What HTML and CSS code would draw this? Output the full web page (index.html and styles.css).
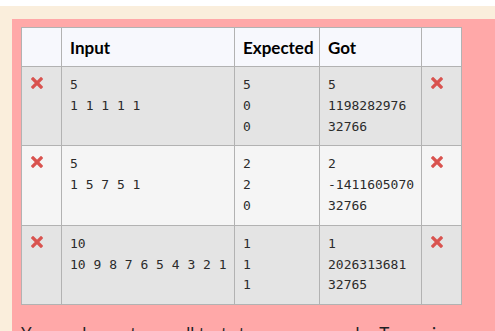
FILE: index.html
```html
<!DOCTYPE html>
<html>
<head>
<meta charset="utf-8">
<link rel="stylesheet" href="styles.css">
</head>
<body>
<div class="page">
  <div class="result">
    <table class="tests">
      <thead>
        <tr>
          <th class="c-icon"></th>
          <th class="c-input">Input</th>
          <th class="c-exp">Expected</th>
          <th class="c-got">Got</th>
          <th class="c-icon"></th>
        </tr>
      </thead>
      <tbody>
        <tr class="r0">
          <td><svg class="x" viewBox="0 0 12 12"><path d="M2 2L10 10M10 2L2 10"/></svg></td>
          <td><pre>5
1 1 1 1 1</pre></td>
          <td><pre>5
0
0</pre></td>
          <td><pre>5
1198282976
32766</pre></td>
          <td><svg class="x" viewBox="0 0 12 12"><path d="M2 2L10 10M10 2L2 10"/></svg></td>
        </tr>
        <tr class="r1">
          <td><svg class="x" viewBox="0 0 12 12"><path d="M2 2L10 10M10 2L2 10"/></svg></td>
          <td><pre>5
1 5 7 5 1</pre></td>
          <td><pre>2
2
0</pre></td>
          <td><pre>2
-1411605070
32766</pre></td>
          <td><svg class="x" viewBox="0 0 12 12"><path d="M2 2L10 10M10 2L2 10"/></svg></td>
        </tr>
        <tr class="r0">
          <td><svg class="x" viewBox="0 0 12 12"><path d="M2 2L10 10M10 2L2 10"/></svg></td>
          <td><pre>10
10 9 8 7 6 5 4 3 2 1</pre></td>
          <td><pre>1
1
1</pre></td>
          <td><pre>1
2026313681
32765</pre></td>
          <td><svg class="x" viewBox="0 0 12 12"><path d="M2 2L10 10M10 2L2 10"/></svg></td>
        </tr>
      </tbody>
    </table>
    <p class="msg">Your code must pass all tests to earn any marks. Try again.</p>
  </div>
</div>
</body>
</html>
```
FILE: styles.css
```css
html, body {
  margin: 0;
  padding: 0;
  background: #ffffff;
  overflow: hidden;
}
body {
  font-family: "Lato", "Open Sans", sans-serif;
  color: #1d2125;
}
.page {
  margin-top: 6px;
  background: #faeedc;
  padding: 13px 0 0 12px;
  min-height: 400px;
}
.result {
  background: #ffa8a8;
  padding: 8px 0 10px 9px;
}
.tests {
  border-collapse: collapse;
  table-layout: fixed;
  width: 441px;
}
.tests th, .tests td {
  box-sizing: border-box;
  border: 1px solid #b2b2b2;
  padding: 8px 8px;
  text-align: left;
  vertical-align: top;
}
.tests th {
  background: #f7f8fd;
  font-weight: 700;
  font-size: 17px;
  line-height: 22px;
  padding-top: 9px;
  padding-bottom: 7px;
  color: #000;
}
.c-icon { width: 40px; }
.c-input { width: 173px; }
.c-exp { width: 85px; }
.c-got { width: 102px; }
.r0 td { background: #e4e4e4; }
.r1 td { background: #f5f5f5; }
pre {
  margin: 0;
  font-family: "DejaVu Sans Mono", monospace;
  font-size: 13px;
  line-height: 20.8px;
  color: #2b2b2b;
}
.x {
  display: block;
  width: 12px;
  height: 12px;
  margin: 2px 0 0 1px;
  fill: none;
  stroke: #d9534f;
  stroke-width: 3.2;
  stroke-linecap: square;
}
.msg {
  margin: 17px 0 0 0;
  font-size: 17px;
  line-height: 24px;
  color: #1d2125;
}
```
